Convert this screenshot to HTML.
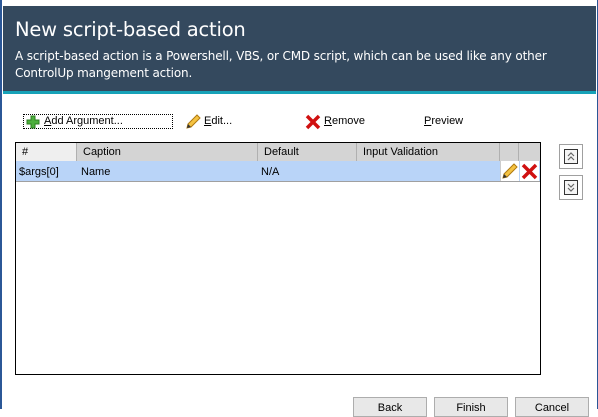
<!DOCTYPE html>
<html><head><style>
*{margin:0;padding:0;box-sizing:border-box}
body{width:598px;height:409px;overflow:hidden;background:#fff;position:relative;font-family:"Liberation Sans",sans-serif;font-size:11px;color:#000}
.a{position:absolute}
.hd{left:3px;top:6px;width:593px;height:85px;background:#34495e;color:#fff}
.teal{left:3px;top:91px;width:593px;height:3px;background:#17a2b8}
.lb{left:0;top:0;width:2px;height:409px;background:#2b5797}
.rb{left:597px;top:0;width:1px;height:409px;background:#2b5797}
.tb{top:115px;font-size:11px}
.th{top:143px;height:18px;background:#d4d4d4;border-right:1px solid #b0b0b0;padding:3px 0 0 6px;font-size:11px}
.tr{top:161px;height:21px;background:#b9d4f8;border-bottom:1px solid #a0a0a0;padding-top:4px;font-size:11px}
.sb{width:24px;height:25px;border:1px solid #a0a0a0;background:#fff}
.bb{top:397px;width:74px;height:20px;border:1px solid #adadad;background:#e8e8e8;text-align:center;padding-top:4px;font-size:11px}
u{text-decoration:underline}
</style></head><body>
<div class="a lb"></div><div class="a rb"></div>
<div class="a hd">
<div class="a" style="left:12px;top:12px;font-size:19.5px;font-family:'DejaVu Sans',sans-serif;letter-spacing:-0.2px">New script-based action</div>
<div class="a" style="left:12px;top:42px;font-size:12px;line-height:17px;width:580px;font-family:'DejaVu Sans',sans-serif;letter-spacing:-0.15px">A script-based action is a Powershell, VBS, or CMD script, which can be used like any other<br>ControlUp mangement action.</div>
</div>
<div class="a teal"></div>

<div class="a" style="left:23px;top:114px;width:150px;height:15px;border:1px dotted #000"></div>
<svg class="a" style="left:26px;top:115px" width="14" height="14"><path d="M5 1h4v4h4v4h-4v4H5V9H1V5h4z" fill="#4caf3c" stroke="#2e7d22"/></svg>
<div class="a tb" style="left:44px"><u>A</u>dd Argument...</div>
<svg class="a" style="left:185px;top:114px" width="16" height="16"><path d="M2 14l1-4L12 1l3 3-9 9z" fill="#f5c342" stroke="#b07a10"/><path d="M2 14l1-4 3 3z" fill="#333"/></svg>
<div class="a tb" style="left:204px"><u>E</u>dit...</div>
<svg class="a" style="left:305px;top:114px" width="16" height="16"><path d="M2 2L14 14M14 2L2 14" stroke="#d01010" stroke-width="3.5"/></svg>
<div class="a tb" style="left:324px"><u>R</u>emove</div>
<div class="a tb" style="left:424px"><u>P</u>review</div>

<div class="a" style="left:15px;top:142px;width:526px;height:233px;border:1px solid #000"></div>
<div class="a th" style="left:16px;width:61px;background:#efefef">#</div>
<div class="a th" style="left:77px;width:181px">Caption</div>
<div class="a th" style="left:258px;width:99px">Default</div>
<div class="a th" style="left:357px;width:143px">Input Validation</div>
<div class="a th" style="left:500px;width:19px"></div>
<div class="a th" style="left:519px;width:21px;border-right:none"></div>
<div class="a tr" style="left:16px;width:524px"></div>
<div class="a" style="left:19px;top:166px">$args[0]</div>
<div class="a" style="left:81px;top:166px">Name</div>
<div class="a" style="left:261px;top:166px">N/A</div>
<div class="a" style="left:500px;top:161px;width:19px;height:20px;background:#fff;border-left:1px solid #ccc"></div>
<div class="a" style="left:520px;top:161px;width:19px;height:20px;background:#fff"></div>
<svg class="a" style="left:501px;top:163px" width="17" height="17"><path d="M2 15l1-4L13 1l3 3-10 10z" fill="#f5c342" stroke="#b07a10"/><path d="M2 15l1-4 3 3z" fill="#333"/></svg>
<svg class="a" style="left:521px;top:163px" width="17" height="17"><path d="M2 2L15 15M15 2L2 15" stroke="#d01010" stroke-width="3.5"/></svg>

<div class="a sb" style="left:559px;top:144px"><svg class="a" style="left:4px;top:4px" width="14" height="15"><rect x="0.5" y="0.5" width="13" height="14" fill="#f4f4f4" stroke="#333"/><path d="M4 7l3-3 3 3M4 11l3-3 3 3" fill="none" stroke="#666" stroke-width="1.2"/></svg></div>
<div class="a sb" style="left:559px;top:175px"><svg class="a" style="left:4px;top:4px" width="14" height="15"><rect x="0.5" y="0.5" width="13" height="14" fill="#f4f4f4" stroke="#333"/><path d="M4 4l3 3 3-3M4 8l3 3 3-3" fill="none" stroke="#666" stroke-width="1.2"/></svg></div>

<div class="a bb" style="left:353px">Back</div>
<div class="a bb" style="left:434px">Finish</div>
<div class="a bb" style="left:515px">Cancel</div>
</body></html>
